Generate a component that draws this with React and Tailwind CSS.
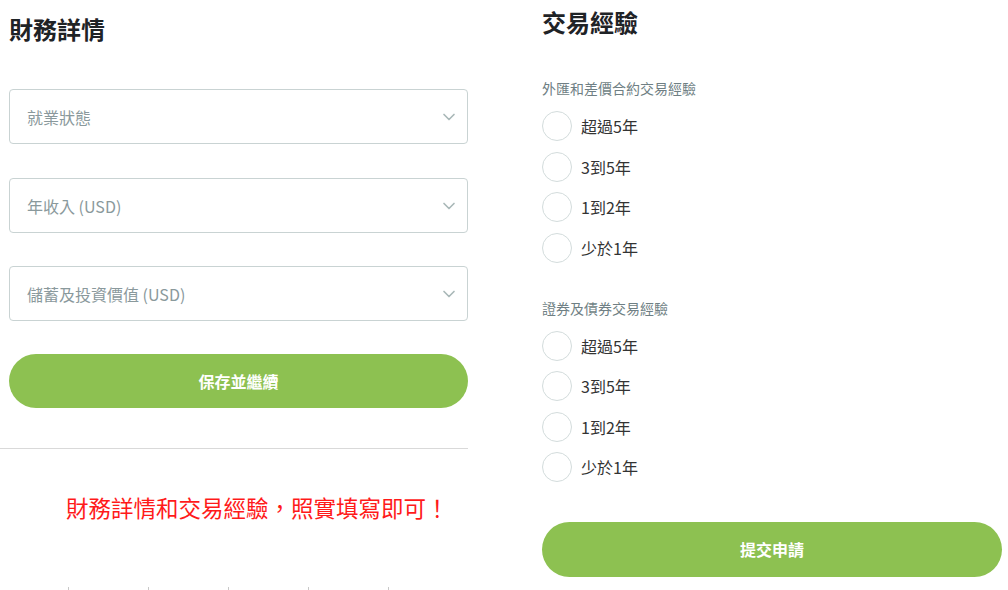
import { ChevronDown } from 'lucide-react'

const font = { fontFamily: '"Noto Sans CJK TC", "Noto Sans", sans-serif' }

const SelectBox = ({ label, className = '' }) => (
  <div className={`flex items-center justify-between h-[55px] pl-[17px] pr-[8px] border border-[#c9d3d3] rounded-[4px] bg-white ${className}`}>
    <span className="text-[16px] text-[#8a999c]">{label}</span>
    <ChevronDown className="w-[20px] h-[20px] text-[#a9b8b8]" strokeWidth={2} />
  </div>
)

const Radio = ({ label }) => (
  <label className="flex items-center h-[30px] gap-[9px]">
    <span className="w-[30px] h-[30px] rounded-full border-[1.5px] border-[#d3dcdc] bg-white shrink-0" />
    <span className="text-[16px] text-[#333]">{label}</span>
  </label>
)

const options = ['超過5年', '3到5年', '1到2年', '少於1年']

export default function App() {
  return (
    <div className="flex w-[1008px] h-[590px] bg-white overflow-hidden" style={font}>
      {/* Left: financial details */}
      <div className="w-[468px] shrink-0 flex flex-col">
        <div className="pl-[9px] pt-[13px]">
          <h2 className="text-[24px] leading-[32px] font-bold text-[#1f2326]">財務詳情</h2>
          <SelectBox label="就業狀態" className="mt-[44px]" />
          <SelectBox label="年收入 (USD)" className="mt-[34px]" />
          <SelectBox label="儲蓄及投資價值 (USD)" className="mt-[33px]" />
          <button className="mt-[33px] w-full h-[54px] rounded-full bg-[#8dc151] text-white text-[16px] font-bold">
            保存並繼續
          </button>
        </div>
        <div className="mt-[40px] h-px bg-[#d9d9d9]" />
        <p className="mt-[43px] pl-[66px] text-[22.5px] leading-[30px] text-[#ff1a1a]">
          財務詳情和交易經驗，照實填寫即可！
        </p>
        <div className="mt-[65px] pl-[68px] flex gap-[79px]">
          {[0, 1, 2, 3, 4].map((i) => (
            <span key={i} className="w-px h-[3px] bg-[#c8c8c8]" />
          ))}
        </div>
      </div>

      {/* Right: trading experience */}
      <div className="ml-[74px] w-[460px] pt-[6px] flex flex-col">
        <h2 className="text-[24px] leading-[32px] font-bold text-[#1f2326]">交易經驗</h2>

        <p className="mt-[40px] text-[14px] leading-[20px] text-[#6f7f84]">外匯和差價合約交易經驗</p>
        <div className="mt-[13px] flex flex-col gap-[10.5px]">
          {options.map((o) => <Radio key={o} label={o} />)}
        </div>

        <p className="mt-[35px] text-[14px] leading-[20px] text-[#6f7f84]">證券及債券交易經驗</p>
        <div className="mt-[13px] flex flex-col gap-[10.5px]">
          {options.map((o) => <Radio key={o} label={o} />)}
        </div>

        <button className="mt-[39.5px] w-full h-[55px] rounded-full bg-[#8dc151] text-white text-[16px] font-bold">
          提交申請
        </button>
      </div>
    </div>
  )
}
